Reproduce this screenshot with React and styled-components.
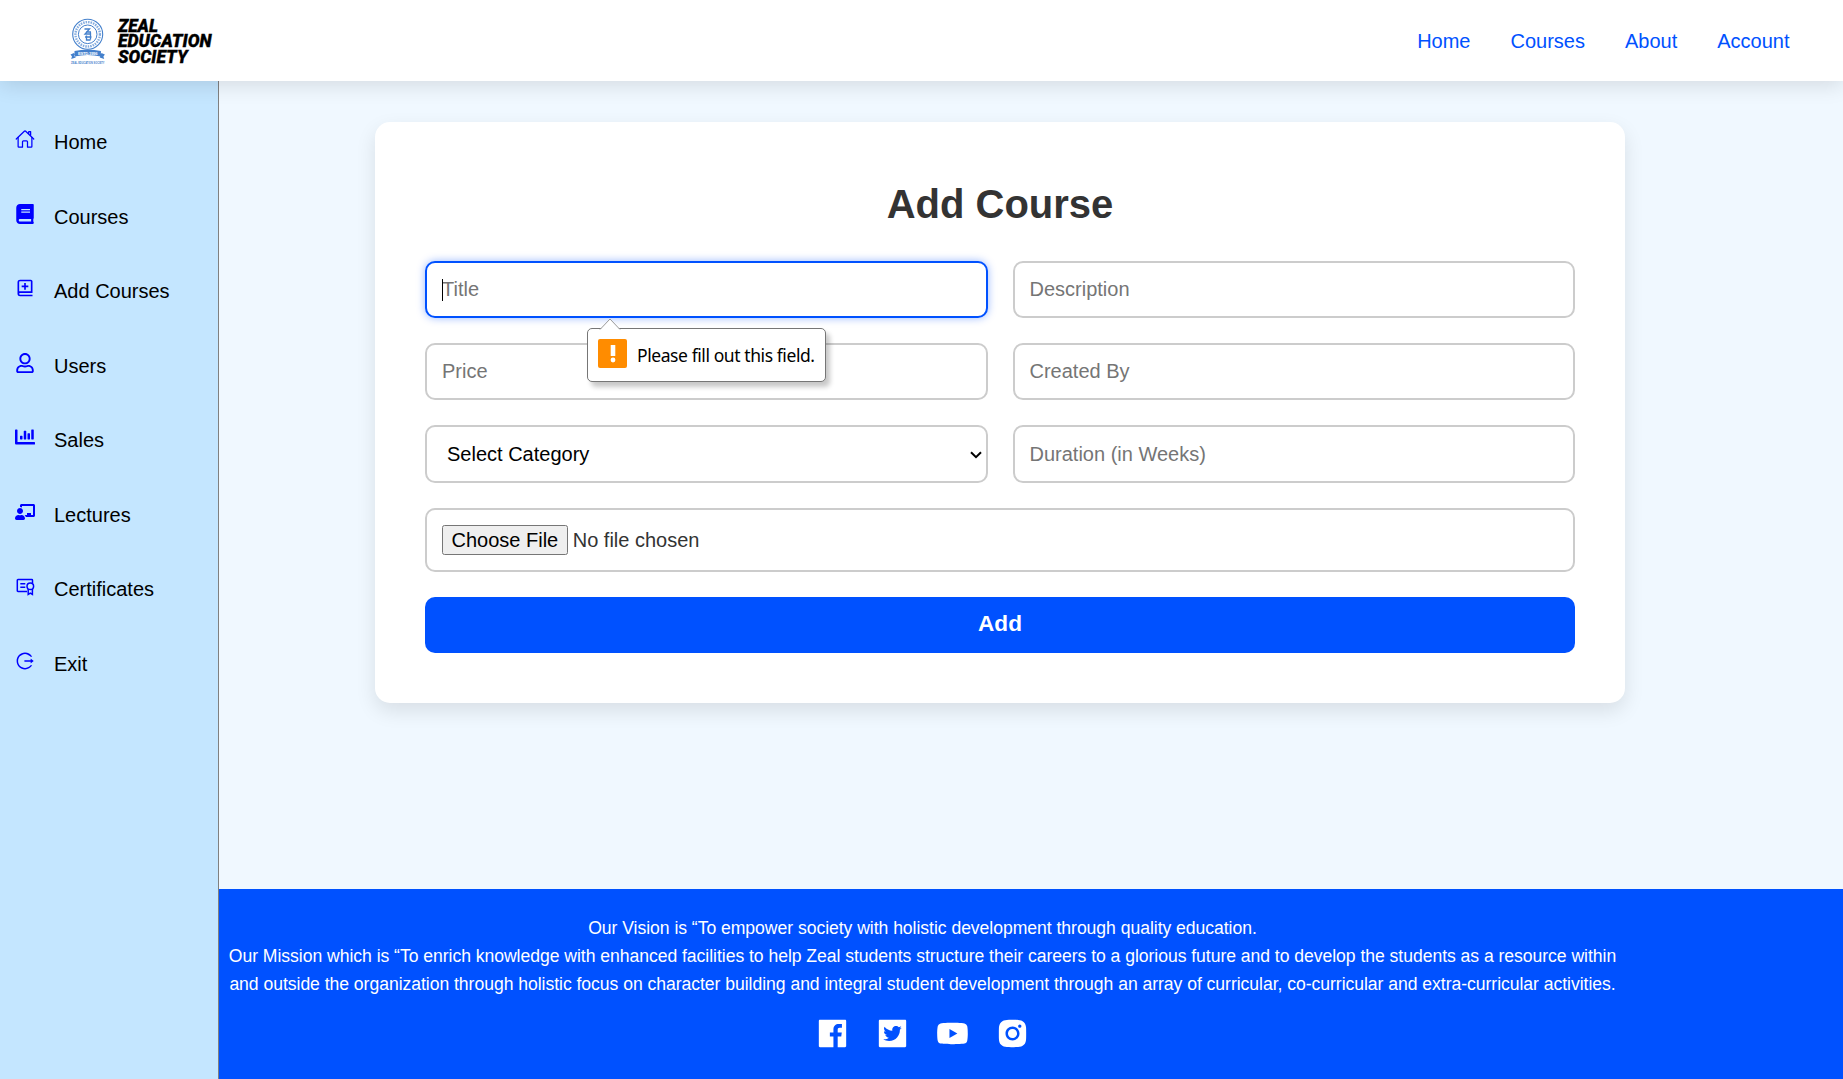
import React from "react";
import styled, { createGlobalStyle } from "styled-components";
import { IoHomeOutline } from "react-icons/io5";
import { FaBook, FaRegUser, FaChartBar, FaChalkboardTeacher } from "react-icons/fa";
import { BiBookAdd } from "react-icons/bi";
import {
  AiOutlineLogout,
  AiFillFacebook,
  AiFillTwitterSquare,
  AiFillYoutube,
  AiFillInstagram,
} from "react-icons/ai";

const GlobalStyle = createGlobalStyle`
  * { box-sizing: border-box; }
  body {
    margin: 0;
    background: #f0f8ff;
    font-family: "Liberation Sans", Arial, sans-serif;
  }
`;

const Page = styled.div`
  display: flex;
  flex-direction: column;
  height: 1079px;
  overflow: hidden;
`;

const Header = styled.header`
  position: relative;
  z-index: 2;
  flex: none;
  display: flex;
  align-items: center;
  justify-content: space-between;
  height: 81px;
  padding: 0 53.5px 0 68px;
  background: #fff;
  box-shadow: 0 4px 20px rgba(0, 0, 0, 0.12);
`;

const Nav = styled.nav`
  display: flex;
  gap: 40px;
  padding-top: 2px;
`;

const NavLink = styled.a`
  font-size: 20px;
  line-height: 23px;
  color: #0051ff;
`;

const Body = styled.div`
  display: flex;
  flex: 1;
  min-height: 0;
`;

const Sidebar = styled.aside`
  flex: none;
  width: 219px;
  padding: 46px 0 0 15px;
  background: #c4e6ff;
  border-right: 1px solid #808080;
`;

const SideItem = styled.a`
  display: flex;
  align-items: flex-start;
  gap: 19px;
  height: 74.5px;
  padding-top: 4px;
  font-size: 20px;
  line-height: 23px;
  color: #000;

  svg {
    flex: none;
    width: 20px;
    height: 20px;
    margin-top: -2px;
    color: #0000ff;
  }
`;

const Content = styled.div`
  flex: 1;
  display: flex;
  flex-direction: column;
  min-width: 0;
`;

const Main = styled.main`
  flex: 1;
  padding: 41px 0 0 156px;
`;

const Card = styled.section`
  width: 1250px;
  height: 581px;
  padding: 50px;
  background: #fff;
  border-radius: 15px;
  box-shadow: 0 8px 20px rgba(0, 0, 0, 0.1);
`;

const Title = styled.h1`
  margin: 0 0 25px;
  padding: 5px 0 4px;
  font-size: 40px;
  line-height: 55px;
  font-weight: 700;
  text-align: center;
  color: #333;
`;

const Form = styled.form`
  display: grid;
  grid-template-columns: 1fr 1fr;
  grid-template-rows: 57px 57px 58px 64px 56px;
  gap: 25px;
`;

const FieldWrap = styled.div`
  position: relative;
  display: flex;
  grid-column: ${(p) => (p.$wide ? "1 / -1" : "auto")};
`;

const fieldStyle = `
  width: 100%;
  margin: 0;
  padding: 15px;
  border-radius: 10px;
  background: #fff;
  font-family: inherit;
  font-size: 20px;
  outline: none;
`;

const Input = styled.input`
  ${fieldStyle}
  color: #333;
  border: 2px solid ${(p) => (p.$active ? "#0051ff" : "#ccc")};
  box-shadow: ${(p) => (p.$active ? "0 0 8px rgba(0, 81, 255, 0.4)" : "none")};

  &::placeholder {
    color: #757575;
  }

  &::file-selector-button {
    height: 30px;
    padding: 2px 7.5px 1px;
    margin-right: 5px;
  }
`;

const Select = styled.select`
  ${fieldStyle}
  appearance: none;
  padding-left: 20px;
  color: #000;
  border: 2px solid #ccc;
`;

const Chevron = styled.svg`
  position: absolute;
  right: 6px;
  top: 26px;
  pointer-events: none;
`;

const Caret = styled.span`
  position: absolute;
  left: 17px;
  top: 18px;
  width: 1px;
  height: 22px;
  background: #000;
`;

const Submit = styled.button`
  grid-column: 1 / -1;
  border: 0;
  border-radius: 10px;
  padding: 0 0 3px;
  background: #0051ff;
  color: #fff;
  font-family: inherit;
  font-size: 22.6px;
  font-weight: 700;
`;

const Tooltip = styled.div`
  position: absolute;
  z-index: 1;
  left: 162px;
  top: 67px;
  display: flex;
  align-items: center;
  gap: 10px;
  width: 239px;
  height: 54px;
  padding: 0 0 0 10px;
  background: #fff;
  border: 1px solid #767676;
  border-radius: 5px;
  box-shadow: 4px 5px 5px rgba(0, 0, 0, 0.22);
  font-family: "Noto Sans", "Open Sans", sans-serif;
  font-size: 17.5px;
  letter-spacing: -0.42px;
  white-space: nowrap;
  color: #000;
`;

const TooltipArrow = styled.svg`
  position: absolute;
  left: 11px;
  top: -11px;
`;

const Alert = styled.span`
  display: flex;
  flex: none;
  align-items: center;
  justify-content: center;
  width: 29px;
  height: 29px;
  margin-bottom: 3px;
  border-radius: 2px;
  background: #ff8c00;
`;

const Footer = styled.footer`
  flex: none;
  display: flex;
  flex-direction: column;
  align-items: center;
  height: 190px;
  padding: 25px 217px 0 0;
  background: #0051ff;
  color: #fff;
`;

const Statement = styled.p`
  margin: 0;
  font-size: 17.6px;
  line-height: 28px;
  text-align: center;
  white-space: nowrap;
  letter-spacing: -0.045px;
`;

const Socials = styled.div`
  display: flex;
  gap: 25px;
  margin-top: 18px;

  svg {
    width: 35px;
    height: 35px;
  }
`;

function Logo() {
  const word = {
    fontFamily: "Roboto, sans-serif",
    fontSize: 18,
    fontWeight: 900,
    fontStyle: "italic",
    lengthAdjust: "spacingAndGlyphs",
    stroke: "#000",
    strokeWidth: 0.3,
  };
  return (
    <svg width="148" height="54" viewBox="68 13 148 54">
      <g fill="none" stroke="#4480cc">
        <circle cx="87.7" cy="33.3" r="15" strokeWidth="1.1" />
        <circle cx="87.7" cy="33.3" r="12.2" strokeWidth="2.4" strokeDasharray="1.5 1" opacity="0.65" />
        <circle cx="87.7" cy="33.3" r="9.3" strokeWidth="1" />
        <path d="M84.5 28h5l-4.5 5h5.5M86 31h5M85 36h6.5M90.5 31.5v7M86.5 34.5v4.5h4" strokeWidth="1.3" />
      </g>
      <path d="M74.5 50q13.2-3 26.4 0v5.5q-13.2-3-26.4 0zM74 52l-3.5 1.5 1.500 2-.8 2.500 4.500-1.500zM101.400 52l3.500 1.500-1.500 2 .8 2.500-4.500-1.500z" fill="#4480cc" />
      <text x="78" y="53.500" fontFamily="Liberation Sans, sans-serif" fontSize="4.200" fontWeight="700" fill="#fff" textLength="19.500">ESTD-1996</text>
      <text x="71" y="63.200" fontFamily="Liberation Sans, sans-serif" fontSize="4.400" fontWeight="700" fill="#4480cc" textLength="33.500" lengthAdjust="spacingAndGlyphs">ZEAL EDUCATION SOCIETY</text>
      <text x="118" y="30.800" textLength="40" {...word}>ZEAL</text>
      <text x="118" y="46.200" textLength="93.500" {...word}>EDUCATION</text>
      <text x="118" y="61.500" textLength="69.500" {...word}>SOCIETY</text>
    </svg>
  );
}

function CertificateIcon() {
  return (
    <svg viewBox="0 0 20 20" fill="none" stroke="currentColor" strokeWidth="1.5">
      <path d="M12 15.400H3a.7.7 0 0 1-.7-.7V4.300a.7.7 0 0 1 .7-.7h13.800a.7.7 0 0 1 .7.7V7" />
      <path d="M5.300 7.800h5M5.300 11.300h5" />
      <circle cx="15.300" cy="10.200" r="3.300" />
      <path d="M13.200 13v5.400l2.100-1.300 2.100 1.300V13" />
    </svg>
  );
}

const navLinks = ["Home", "Courses", "About", "Account"];

const sideItems = [
  ["Home", IoHomeOutline],
  ["Courses", FaBook],
  ["Add Courses", BiBookAdd],
  ["Users", FaRegUser],
  ["Sales", FaChartBar],
  ["Lectures", FaChalkboardTeacher],
  ["Certificates", CertificateIcon],
  ["Exit", AiOutlineLogout],
];

function ValidationTip() {
  return (
    <Tooltip>
      <TooltipArrow width="22" height="12" viewBox="0 0 22 12">
        <path d="M1 11.500L11 1l10 10.500" fill="#fff" stroke="#999" />
      </TooltipArrow>
      <Alert>
        <svg width="6" height="18" viewBox="0 0 6 18" fill="#fff">
          <rect x="0.700" y="0" width="4.600" height="11" rx="0.500" />
          <circle cx="3" cy="15" r="2.400" />
        </svg>
      </Alert>
      Please fill out this field.
    </Tooltip>
  );
}

export default function App() {
  return (
    <Page>
      <GlobalStyle />
      <Header>
        <Logo />
        <Nav>
          {navLinks.map((label) => (
            <NavLink key={label}>{label}</NavLink>
          ))}
        </Nav>
      </Header>
      <Body>
        <Sidebar>
          {sideItems.map(([label, Icon]) => (
            <SideItem key={label}>
              <Icon />
              {label}
            </SideItem>
          ))}
        </Sidebar>
        <Content>
          <Main>
            <Card>
              <Title>Add Course</Title>
              <Form>
                <FieldWrap>
                  <Input $active placeholder="Title" />
                  <Caret />
                  <ValidationTip />
                </FieldWrap>
                <FieldWrap>
                  <Input placeholder="Description" />
                </FieldWrap>
                <FieldWrap>
                  <Input placeholder="Price" />
                </FieldWrap>
                <FieldWrap>
                  <Input placeholder="Created By" />
                </FieldWrap>
                <FieldWrap>
                  <Select defaultValue="">
                    <option value="">Select Category</option>
                  </Select>
                  <Chevron width="12" height="8" viewBox="0 0 12 8">
                    <path d="M1 1.200l5 5 5-5" fill="none" stroke="#000" strokeWidth="2" />
                  </Chevron>
                </FieldWrap>
                <FieldWrap>
                  <Input placeholder="Duration (in Weeks)" />
                </FieldWrap>
                <FieldWrap $wide>
                  <Input type="file" />
                </FieldWrap>
                <Submit type="button">Add</Submit>
              </Form>
            </Card>
          </Main>
          <Footer>
            <Statement>
              Our Vision is “To empower society with holistic development through quality education.
            </Statement>
            <Statement>
              Our Mission which is “To enrich knowledge with enhanced facilities to help Zeal students
              structure their careers to a glorious future and to develop the students as a resource within
              <br />
              and outside the organization through holistic focus on character building and integral student
              development through an array of curricular, co-curricular and extra-curricular activities.
            </Statement>
            <Socials>
              <AiFillFacebook />
              <AiFillTwitterSquare />
              <AiFillYoutube />
              <AiFillInstagram />
            </Socials>
          </Footer>
        </Content>
      </Body>
    </Page>
  );
}
